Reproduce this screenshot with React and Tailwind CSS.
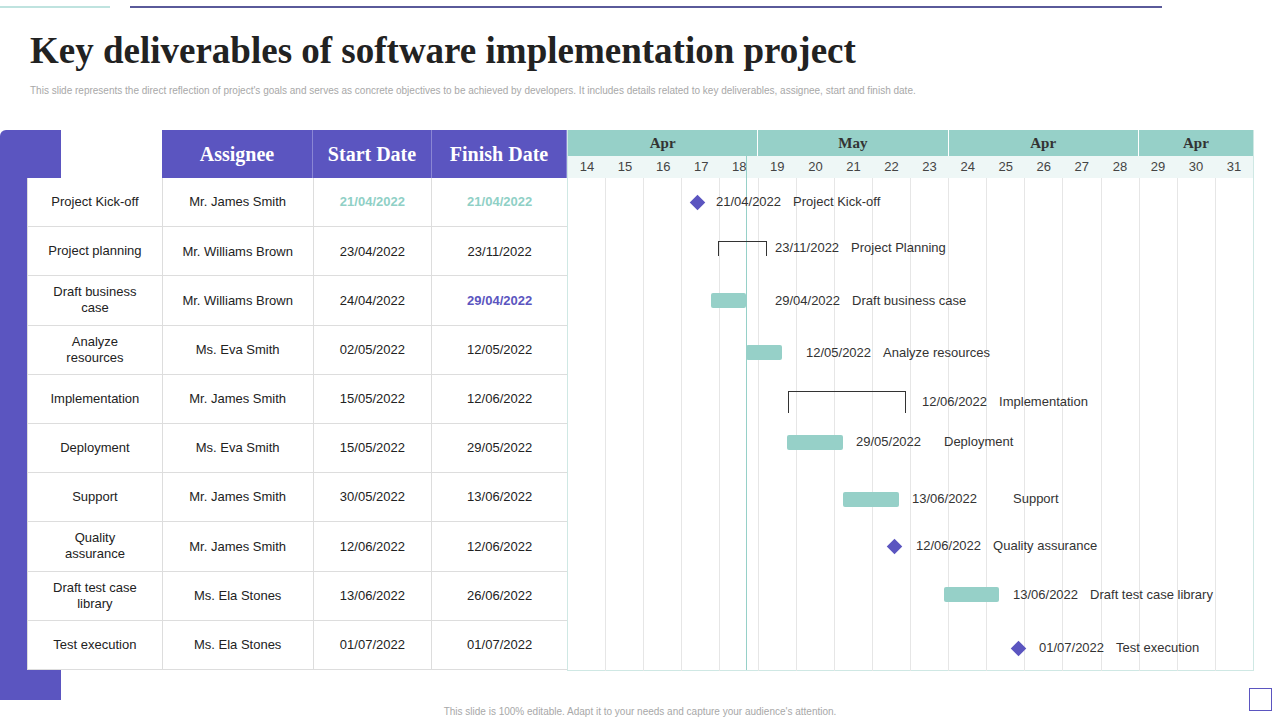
import React from "react";

const rows = [
  ["Project Kick-off", "Mr. James Smith", "21/04/2022", "21/04/2022", "t", "t"],
  ["Project planning", "Mr. Williams Brown", "23/04/2022", "23/11/2022"],
  ["Draft business case", "Mr. Williams Brown", "24/04/2022", "29/04/2022", "", "p"],
  ["Analyze resources", "Ms. Eva Smith", "02/05/2022", "12/05/2022"],
  ["Implementation", "Mr. James Smith", "15/05/2022", "12/06/2022"],
  ["Deployment", "Ms. Eva Smith", "15/05/2022", "29/05/2022"],
  ["Support", "Mr. James Smith", "30/05/2022", "13/06/2022"],
  ["Quality assurance", "Mr. James Smith", "12/06/2022", "12/06/2022"],
  ["Draft test case library", "Ms. Ela Stones", "13/06/2022", "26/06/2022"],
  ["Test execution", "Ms. Ela Stones", "01/07/2022", "01/07/2022"],
];
const days = [14,15,16,17,18,19,20,21,22,23,24,25,26,27,28,29,30,31];
const G = 567, T = 178;

// gantt items: type, x1, x2, y1, y2, textX, textY, date, label, labelX
const items = [
  ["d", 697, 0, 202, 0, 716, 202, "21/04/2022", "Project Kick-off", null],
  ["b", 718, 767, 241, 256, 775, 248, "23/11/2022", "Project Planning", null],
  ["r", 711, 746, 293, 308, 775, 301, "29/04/2022", "Draft business case", null],
  ["r", 746, 782, 345, 360, 806, 353, "12/05/2022", "Analyze resources", null],
  ["b", 788, 906, 391, 413, 922, 402, "12/06/2022", "Implementation", null],
  ["r", 787, 843, 435, 450, 856, 442, "29/05/2022", "Deployment", 944],
  ["r", 843, 899, 492, 507, 912, 499, "13/06/2022", "Support", 1013],
  ["d", 894, 0, 546, 0, 916, 546, "12/06/2022", "Quality assurance", null],
  ["r", 944, 999, 587, 602, 1013, 595, "13/06/2022", "Draft test case library", null],
  ["d", 1018, 0, 648, 0, 1039, 648, "01/07/2022", "Test execution", null],
];

export default function App() {
  const sans = { fontFamily: '"Liberation Sans", Arial, sans-serif' };
  return (
    <div className="relative w-[1280px] h-[720px] bg-white overflow-hidden" style={sans}>
      <div className="absolute left-0 top-[6px] w-[110px] h-[2px] bg-[#bfe3df]" />
      <div className="absolute left-[130px] top-[6px] w-[1032px] h-[2px] bg-[#5a5a9a]" />
      <div className="pl-[30px] pt-[30px]">
        <h1 className="text-[37px] leading-[42px] font-bold text-[#222]" style={{ fontFamily: '"Liberation Serif", "DejaVu Serif", serif' }}>
          Key deliverables of software implementation project
        </h1>
        <p className="text-[10px] text-[#a8a8a8] mt-[11px]">
          This slide represents the direct reflection of project's goals and serves as concrete objectives to be achieved by developers. It includes details related to key deliverables, assignee, start and finish date.
        </p>
      </div>

      {/* left purple block */}
      <div className="absolute left-0 top-[130px] w-[61px] h-[570px] bg-[#5b55c0] rounded-tl-[6px]" />

      {/* table */}
      <div className="absolute left-[27px] top-[130px] w-[540px]">
        <div className="flex h-[48px]">
          <div className="w-[135px] h-full" />
          {["Assignee", "Start Date", "Finish Date"].map((h, i) => (
            <div key={h} className={`${["w-[151px]", "w-[119px]", "w-[135px]"][i]} h-full bg-[#5b55c0] text-white flex items-center justify-center font-bold text-[20px] border-r border-[#8a86d4]`} style={{ fontFamily: '"Liberation Serif", serif' }}>
              {h}
            </div>
          ))}
        </div>
        <div className="bg-white border-l border-[#ddd]">
          {rows.map((r, i) => (
            <div key={i} className="flex h-[49.2px] border-b border-[#ddd] text-[13px] text-[#222]">
              <div className="w-[135px] flex items-center justify-center text-center leading-[16px] px-5 border-r border-[#ddd]">{r[0]}</div>
              <div className="w-[151px] flex items-center justify-center border-r border-[#ddd]">{r[1]}</div>
              <div className={`w-[119px] flex items-center justify-center border-r border-[#ddd] ${r[4] === "t" ? "text-[#8fd0c6] font-bold" : ""}`}>{r[2]}</div>
              <div className={`w-[135px] flex items-center justify-center ${r[5] === "t" ? "text-[#8fd0c6] font-bold" : r[5] === "p" ? "text-[#5b55c0] font-bold" : ""}`}>{r[3]}</div>
            </div>
          ))}
        </div>
      </div>

      {/* gantt */}
      <div className="absolute left-[567px] top-[130px] w-[687px] h-[541px] border-l border-r border-b border-[#cfe8e4]">
        <div className="flex h-[26px] bg-[#96d0c8] text-[15px] font-bold text-[#333]" style={{ fontFamily: '"Liberation Serif", serif' }}>
          {[["Apr", 5], ["May", 5], ["Apr", 5], ["Apr", 3]].map(([m, n], i) => (
            <div key={i} className="flex items-center justify-center border-r border-white last:border-r-0" style={{ width: (687 / 18) * n }}>{m}</div>
          ))}
        </div>
        <div className="flex h-[22px] bg-[#eef7f6] text-[13px] text-[#444]">
          {days.map((d) => (
            <div key={d} className="flex-1 flex items-center justify-center">{d}</div>
          ))}
        </div>
        <div className="flex h-[493px]">
          {days.map((d) => (
            <div key={d} className="flex-1 border-r border-[#e6e6e6] last:border-r-0" />
          ))}
        </div>
      </div>
      <div className="absolute left-[746px] top-[155px] w-px h-[515px] bg-[#96d0c8]" />

      {items.map((it, i) => {
        const [t, x1, x2, y1, y2, tx, ty, date, label, lx] = it;
        return (
          <React.Fragment key={i}>
            {t === "d" && (
              <div className="absolute w-[11px] h-[11px] bg-[#5b55c0] rotate-45" style={{ left: x1 - 5, top: y1 - 5 }} />
            )}
            {t === "r" && (
              <div className="absolute bg-[#96d0c8] rounded-[2px]" style={{ left: x1, top: y1, width: x2 - x1, height: y2 - y1 }} />
            )}
            {t === "b" && (
              <div className="absolute border-t border-l border-r border-[#333]" style={{ left: x1, top: y1, width: x2 - x1, height: y2 - y1 }} />
            )}
            <div className="absolute text-[13px] text-[#333] whitespace-nowrap leading-[16px]" style={{ left: tx, top: ty - 8 }}>
              {date}
              {lx ? null : <span className="ml-[12px]">{label}</span>}
            </div>
            {lx && (
              <div className="absolute text-[13px] text-[#333] leading-[16px]" style={{ left: lx, top: ty - 8 }}>{label}</div>
            )}
          </React.Fragment>
        );
      })}

      <div className="absolute left-0 right-0 top-[704px] text-center text-[10px] text-[#a8a8a8]">
        This slide is 100% editable. Adapt it to your needs and capture your audience's attention.
      </div>
      <div className="absolute left-[1249px] top-[688px] w-[23px] h-[23px] border border-[#5b55c0]" />
    </div>
  );
}
